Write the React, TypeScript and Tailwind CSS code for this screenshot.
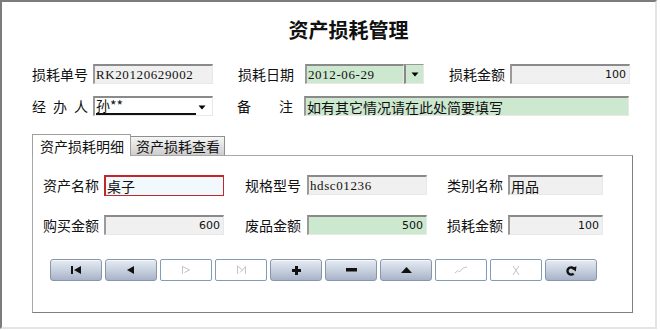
import React from "react";

const cjk = { fontFamily: '"Noto Sans CJK SC", "Noto Sans", sans-serif' };
const mono = { fontFamily: '"Liberation Serif", "DejaVu Serif", serif', letterSpacing: "0.6px" };
const num = { fontFamily: '"DejaVu Sans", "Liberation Sans", sans-serif' };

function Label({ text, spread = false, className = "" }: { text: string; spread?: boolean; className?: string }) {
  if (spread) {
    const chars = Array.from(text);
    return (
      <div className={`w-[56px] h-[20px] flex justify-between items-center text-[14px] leading-[20px] text-[#111] ${className}`} style={cjk}>
        {chars.map((c, i) => (
          <span key={i}>{c}</span>
        ))}
      </div>
    );
  }
  return (
    <div className={`w-[56px] h-[20px] text-[14px] leading-[20px] text-[#111] whitespace-nowrap ${className}`} style={cjk}>
      {text}
    </div>
  );
}

const sunken =
  "border-t-2 border-l-2 border-t-[#8a8a8a] border-l-[#9a9a9a] border-r border-b border-r-[#e8e8e8] border-b-[#e8e8e8]";

function Field({
  value,
  w,
  bg = "bg-[#f0f0f0]",
  align = "left",
  font = "cjk",
  className = "",
}: {
  value: string;
  w: string;
  bg?: string;
  align?: "left" | "right";
  font?: "cjk" | "mono" | "num";
  className?: string;
}) {
  const style = font === "mono" ? mono : font === "num" ? num : cjk;
  const size = font === "mono" ? "text-[13px]" : font === "num" ? "text-[11px]" : "text-[14px]";
  return (
    <div
      className={`${w} h-[20px] ${bg} ${sunken} flex items-center overflow-hidden ${
        align === "right" ? "justify-end pr-[3px]" : "pl-[1px]"
      } ${className}`}
    >
      <span className={`${size} leading-[16px] text-[#111] whitespace-nowrap`} style={style}>
        {value}
      </span>
    </div>
  );
}

function DownTri() {
  return (
    <svg width="8" height="5" viewBox="0 0 8 5">
      <polygon points="0.5,0.5 7.5,0.5 4,4.5" fill="#000" />
    </svg>
  );
}

const faint = "#c4c4c4";

function Icon({ kind }: { kind: string }) {
  switch (kind) {
    case "first":
      return (
        <svg width="10" height="8" viewBox="0 0 10 8">
          <rect x="0" y="0" width="2" height="8" fill="#111" />
          <polygon points="10,0 10,8 3,4" fill="#111" />
        </svg>
      );
    case "prev":
      return (
        <svg width="8" height="8" viewBox="0 0 8 8">
          <polygon points="7,0 7,8 0,4" fill="#111" />
        </svg>
      );
    case "next":
      return (
        <svg width="10" height="10" viewBox="0 0 10 10">
          <path d="M1.5 1 V9 M1.5 1.5 L8.5 5 L3.5 7.5" fill="none" stroke={faint} strokeWidth="1" />
        </svg>
      );
    case "last":
      return (
        <svg width="11" height="10" viewBox="0 0 11 10">
          <path d="M1.5 9 V1 L6.5 5 L9.5 1.5 V9 M4 7.5 L6.5 5" fill="none" stroke={faint} strokeWidth="1" />
        </svg>
      );
    case "add":
      return (
        <svg width="9" height="9" viewBox="0 0 9 9">
          <rect x="3" y="0" width="3" height="9" fill="#111" />
          <rect x="0" y="3" width="9" height="3" fill="#111" />
        </svg>
      );
    case "del":
      return (
        <svg width="11" height="4" viewBox="0 0 11 4">
          <rect x="0" y="0" width="11" height="3.5" fill="#111" />
        </svg>
      );
    case "edit":
      return (
        <svg width="11" height="6" viewBox="0 0 11 6">
          <polygon points="0,6 5.5,0 11,6" fill="#111" />
        </svg>
      );
    case "save":
      return (
        <svg width="14" height="8" viewBox="0 0 14 8">
          <path d="M1 7 L4 4.5 L5.5 6 L9 2 L13 1" fill="none" stroke={faint} strokeWidth="1" />
        </svg>
      );
    case "cancel":
      return (
        <svg width="10" height="11" viewBox="0 0 10 11">
          <path d="M2 1 Q5 5 8 10 M8 1 Q5 5 2 10" fill="none" stroke={faint} strokeWidth="1" />
        </svg>
      );
    case "refresh":
      return (
        <svg width="11" height="11" viewBox="0 0 11 11">
          <path d="M8.2 4.2 A3.6 3.6 0 1 0 7.6 8.6" fill="none" stroke="#111" strokeWidth="2.4" />
          <polygon points="5.5,3.2 10.5,1.2 9.8,6.4" fill="#111" />
        </svg>
      );
    default:
      return null;
  }
}

function NavButton({ kind, disabled }: { kind: string; disabled?: boolean }) {
  return (
    <div
      className={
        disabled
          ? "w-[52px] h-[22px] bg-white border border-[#7f9db9] rounded-[2px] flex items-center justify-center"
          : "w-[52px] h-[22px] bg-linear-to-b from-[#e6ebf3] via-[#c8d1df] to-[#a7b3c8] border border-[#8795ad] rounded-[3px] flex items-center justify-center shadow-[inset_0_1px_0_#f4f7fb]"
      }
    >
      <Icon kind={kind} />
    </div>
  );
}

export default function App() {
  const buttons: [string, boolean][] = [
    ["first", false],
    ["prev", false],
    ["next", true],
    ["last", true],
    ["add", false],
    ["del", false],
    ["edit", false],
    ["save", true],
    ["cancel", true],
    ["refresh", false],
  ];
  return (
    <div className="w-[660px] h-[330px] bg-white">
      <div className="w-[657px] h-[329px] bg-white border-t-2 border-l-2 border-t-[#7c7c7c] border-l-[#7c7c7c] border-r-2 border-b-2 border-r-[#e4e4e4] border-b-[#e4e4e4]">
        {/* Title */}
        <div className="pt-[16px] pl-[40px] text-center">
          <span className="text-[20px] leading-[24px] font-bold text-[#111]" style={cjk}>
            资产损耗管理
          </span>
        </div>

        {/* Row 1 */}
        <div className="mt-[20px] pl-[30px] flex items-center h-[20px]">
          <Label text="损耗单号" />
          <Field value="RK20120629002" w="w-[120px]" font="mono" className="ml-[5px]" />
          <Label text="损耗日期" className="ml-[25px]" />
          <div className="ml-[11px] flex">
            <Field value="2012-06-29" w="w-[99px]" bg="bg-[#cce8cf]" font="mono" />
            <div className="w-[20px] h-[20px] bg-[#cce8cf] border-l-2 border-t border-l-[#8a8a8a] border-t-[#9a9a9a] border-b border-r border-b-[#e8e8e8] border-r-[#e8e8e8] flex items-center justify-center">
              <DownTri />
            </div>
          </div>
          <Label text="损耗金额" className="ml-[25px]" />
          <Field value="100" w="w-[120px]" align="right" font="num" className="ml-[5px]" />
        </div>

        {/* Row 2 */}
        <div className="mt-[12px] pl-[30px] flex items-center h-[20px]">
          <Label text="经办人" spread />
          <div className={`ml-[5px] w-[120px] h-[20px] bg-white ${sunken} flex items-center relative`}>
            <span className="ml-[1px] w-[100px] h-[17px] border-b-2 border-[#111] text-[14px] leading-[15px] text-[#111]" style={cjk}>
              孙**
            </span>
            <span className="absolute right-[6px] top-[7px]">
              <DownTri />
            </span>
          </div>
          <Label text="备注" spread className="ml-[24px]" />
          <Field value="如有其它情况请在此处简要填写" w="w-[325px]" bg="bg-[#cce8cf]" className="ml-[11px]" />
        </div>

        {/* Tabs */}
        <div className="mt-[18px] pl-[30px]">
          <div className="flex items-end h-[21px]">
            <div className="w-[99px] h-[22px] -mb-px bg-white border-t border-l border-r border-[#a0a0a0] relative z-10 flex items-center pl-[7px]">
              <span className="text-[14px] leading-[18px] text-[#111]" style={cjk}>
                资产损耗明细
              </span>
            </div>
            <div className="w-[94px] h-[19px] bg-linear-to-b from-[#f6f6f6] to-[#cdcdcd] border-t border-r border-[#8e8e8e] flex items-center pl-[5px]">
              <span className="text-[14px] leading-[18px] text-[#111]" style={cjk}>
                资产损耗查看
              </span>
            </div>
          </div>
          <div className="w-[601px] h-[158px] border border-[#a8a8a8] border-r-[#7f7f7f] border-b-[#7f7f7f] bg-white pl-[10px] pt-[19px]">
            <div className="flex items-center h-[20px]">
              <Label text="资产名称" />
              <div className="ml-[5px] w-[120px] h-[21px] bg-[#f2f9fd] border-t-2 border-l-2 border-r border-b border-[#c0282c] flex items-center pl-[1px]">
                <span className="text-[14px] leading-[16px] text-[#111]" style={cjk}>
                  桌子
                </span>
              </div>
              <Label text="规格型号" className="ml-[21px]" />
              <Field value="hdsc01236" w="w-[120px]" font="mono" className="ml-[6px]" />
              <Label text="类别名称" className="ml-[20px]" />
              <Field value="用品" w="w-[95px]" className="ml-[5px]" />
            </div>
            <div className="mt-[20px] flex items-center h-[20px]">
              <Label text="购买金额" />
              <Field value="600" w="w-[120px]" align="right" font="num" className="ml-[5px]" />
              <Label text="废品金额" className="ml-[21px]" />
              <Field value="500" w="w-[120px]" bg="bg-[#cce8cf]" align="right" font="num" className="ml-[6px]" />
              <Label text="损耗金额" className="ml-[20px]" />
              <Field value="100" w="w-[95px]" align="right" font="num" className="ml-[5px]" />
            </div>
            <div className="mt-[24px] ml-[7px] flex gap-[3px]">
              {buttons.map(([k, d]) => (
                <NavButton key={k} kind={k} disabled={d} />
              ))}
            </div>
          </div>
        </div>
      </div>
    </div>
  );
}
